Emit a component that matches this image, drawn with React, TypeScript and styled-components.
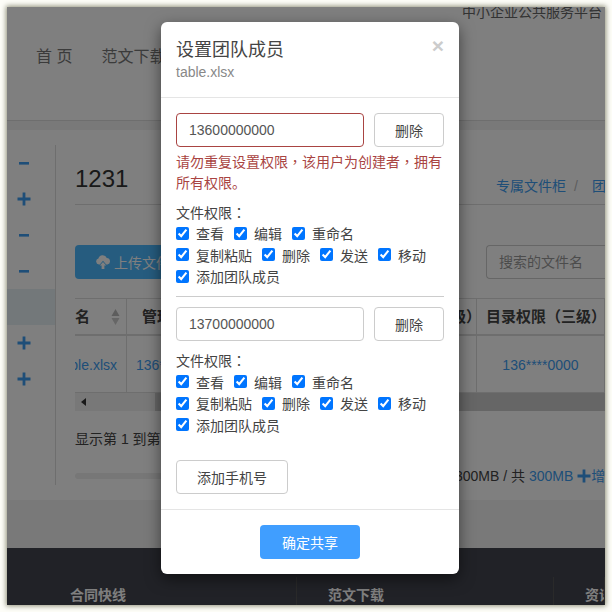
import React from 'react';
import styled, { createGlobalStyle } from 'styled-components';

const FONT = `"Liberation Sans", "Noto Sans CJK SC", sans-serif`;

const GlobalStyle = createGlobalStyle`
  html, body {
    margin: 0;
    padding: 0;
    background: #fdfdf8;
    font-family: ${FONT};
    font-size: 14px;
    color: #444;
  }
  * {
    box-sizing: border-box;
  }
`;

const Stage = styled.div`
  width: 612px;
  height: 612px;
  padding: 7px;
  overflow: hidden;
`;

const Frame = styled.div`
  position: relative;
  width: 598px;
  height: 598px;
  background: #fff;
  overflow: hidden;
  box-shadow: 0 0 5px 1px #8f8f78;
`;

/* page behind the dialog */
const TopNote = styled.div`
  height: 12px;
  padding-right: 3px;
  text-align: right;
  line-height: 10px;
  white-space: nowrap;
  color: #666;
`;

const Nav = styled.div`
  height: 102px;
  display: flex;
  gap: 29px;
  padding: 27px 0 0 29px;
  font-size: 16px;
  line-height: 22px;
  color: #777;
  border-bottom: 1px solid #ddd;
`;

const Main = styled.div`
  height: 427px;
  padding-top: 9px;
  background: #f2f2f2;
`;

const Card = styled.div`
  height: 370px;
  padding-top: 15px;
  background: #fff;
  display: flex;
`;

const Side = styled.div`
  width: 49px;
  height: 340px;
  border-right: 1px solid #ddd;
  display: flex;
  flex-direction: column;
`;

const SideRow = styled.div<{ $active?: boolean }>`
  height: 36px;
  display: flex;
  align-items: center;
  padding-left: 10px;
  background: ${(p) => (p.$active ? '#e6f0f5' : 'transparent')};
  color: #3c9cf0;
`;

const Content = styled.div`
  flex: 1;
  min-width: 0;
  padding-left: 19px;
`;

const TitleRow = styled.div`
  height: 60px;
  display: flex;
  justify-content: space-between;
  padding-top: 15px;
  border-bottom: 1px solid #ddd;
  overflow: hidden;
`;

const PageTitle = styled.div`
  font-size: 24px;
  line-height: 38px;
  color: #333;
`;

const Crumbs = styled.div`
  padding-top: 19px;
  line-height: 14px;
  color: #3c9cf0;
  white-space: nowrap;
  width: 109px;

  span {
    color: #bbb;
    margin: 0 14px 0 8px;
  }
`;

const Tools = styled.div`
  height: 94px;
  display: flex;
  justify-content: space-between;
  padding-top: 40px;
`;

const UploadButton = styled.div`
  width: 120px;
  height: 34px;
  border-radius: 4px;
  background: #4cb8ff;
  color: #fff;
  display: flex;
  align-items: center;
  gap: 3px;
  padding-left: 20px;
  font-size: 14px;
  white-space: nowrap;
`;

const Search = styled.div`
  width: 119px;
  height: 34px;
  border: 1px solid #ccc;
  border-right: none;
  border-radius: 4px 0 0 4px;
  padding-left: 12px;
  line-height: 32px;
  color: #999;
  white-space: nowrap;
  overflow: hidden;
`;

const Table = styled.div`
  border-top: 1px solid #ddd;
  margin-top: -1px;
`;

const TableHead = styled.div`
  height: 37px;
  display: flex;
  border-bottom: 2px solid #ddd;
  font-size: 15px;
  font-weight: bold;
  line-height: 36px;
  white-space: nowrap;
  overflow: hidden;
`;

const TableBody = styled.div`
  height: 57px;
  display: flex;
  border-bottom: 1px solid #ddd;
  line-height: 58px;
  color: #3c9cf0;
  white-space: nowrap;
  overflow: hidden;
`;

const Cell = styled.div<{ $width: number; $center?: boolean; $pad?: number }>`
  position: relative;
  flex: none;
  width: ${(p) => p.$width}px;
  border-right: 1px solid #ddd;
  padding-left: ${(p) => p.$pad ?? 9}px;
  overflow: hidden;
  text-align: ${(p) => (p.$center ? 'center' : 'left')};
`;

const FileCell = styled(Cell)`
  padding: 0 9px 0 0;
  direction: rtl;
`;

const Spacer = styled.div`
  flex: 1;
`;

const Sort = styled.svg`
  position: absolute;
  right: 6px;
  top: 10px;
`;

const Scroll = styled.div`
  height: 18px;
  display: flex;
  background: #f1f1f1;
`;

const ScrollArrow = styled.div`
  width: 17px;
  display: flex;
  align-items: center;
  justify-content: center;
`;

const ScrollThumb = styled.div`
  margin-left: 63px;
  flex: 1;
  background: #ccc;
`;

const Showing = styled.div`
  margin-top: 18px;
  line-height: 20px;
  white-space: nowrap;
`;

const Usage = styled.div`
  position: relative;
  margin-top: 17px;
  height: 20px;
`;

const UsageBar = styled.div`
  position: absolute;
  left: 0;
  right: 0;
  top: 7px;
  height: 6px;
  background: #eee;
  border-radius: 3px;
`;

const UsageText = styled.div`
  position: absolute;
  right: 0;
  top: 0;
  width: 150px;
  display: flex;
  align-items: center;
  line-height: 20px;
  white-space: pre;
  font-size: 14px;
  overflow: hidden;
  background: #fff;

  a {
    display: flex;
    align-items: center;
    color: #3c9cf0;
  }
`;

const Footer = styled.div`
  height: 57px;
  background: #42444e;
  display: flex;
  padding-top: 29px;
  font-weight: bold;
  color: #fff;
  line-height: 20px;
`;

const FooterCol = styled.div<{ $width: number; $pad: number }>`
  flex: none;
  width: ${(p) => p.$width}px;
  padding: 8px 0 0 ${(p) => p.$pad}px;
  white-space: nowrap;
  overflow: hidden;
  border-right: 1px solid #555;
`;

/* dialog */
const Backdrop = styled.div`
  position: absolute;
  inset: 0;
  background: rgba(0, 0, 0, 0.5);
  padding: 15px 0 0 154px;
`;

const Dialog = styled.div`
  width: 298px;
  height: 552px;
  background: #fff;
  border-radius: 6px;
  box-shadow: 0 5px 15px rgba(0, 0, 0, 0.5);
  display: flex;
  flex-direction: column;
`;

const DialogHead = styled.div`
  position: relative;
  height: 76px;
  padding: 15px 15px 0;
  border-bottom: 1px solid #e5e5e5;
`;

const DialogTitle = styled.div`
  font-size: 18px;
  line-height: 26px;
`;

const DialogSub = styled.div`
  margin-top: 1px;
  line-height: 16px;
  color: #888;
`;

const Close = styled.div`
  position: absolute;
  right: 15px;
  top: 13px;
  font-family: "Liberation Sans", sans-serif;
  font-size: 21px;
  font-weight: bold;
  line-height: 21px;
  color: #ccc;
`;

const DialogBody = styled.div`
  flex: 1;
  padding: 15px 15px 0;
`;

const PhoneRow = styled.div`
  display: flex;
  gap: 10px;
`;

const PhoneInput = styled.input<{ $error?: boolean }>`
  width: 188px;
  height: 34px;
  padding: 0 12px;
  border: 1px solid ${(p) => (p.$error ? '#a94442' : '#ccc')};
  border-radius: 4px;
  font-family: ${FONT};
  font-size: 14px;
  color: #555;
  outline: none;
`;

const PlainButton = styled.button<{ $width: number }>`
  width: ${(p) => p.$width}px;
  height: 34px;
  padding: 0;
  background: #fff;
  border: 1px solid #ccc;
  border-radius: 4px;
  font-family: ${FONT};
  font-size: 14px;
  color: #444;
`;

const ErrorText = styled.div`
  margin-top: 5px;
  line-height: 21px;
  color: #a94442;
`;

const Punct = styled.span`
  font-family: "Noto Sans CJK TC", sans-serif;
  line-height: 0;
`;

const PermLabel = styled.div<{ $top: number }>`
  margin-top: ${(p) => p.$top}px;
  line-height: 20px;
`;

const PermRow = styled.div`
  display: flex;
  height: 21.5px;
  align-items: center;
  gap: 10px;
`;

const Perm = styled.label`
  display: flex;
  align-items: center;
  gap: 7px;
  white-space: nowrap;

  input {
    width: 13px;
    height: 13px;
    margin: 0;
    flex: none;
  }
`;

const Rule = styled.hr`
  margin: 8.5px 0 10px;
  border: none;
  border-top: 1px solid #ccc;
`;

const AddRow = styled.div`
  margin-top: 24.5px;
`;

const DialogFoot = styled.div`
  height: 65px;
  border-top: 1px solid #e5e5e5;
  display: flex;
  justify-content: center;
  padding-top: 15px;
`;

const Confirm = styled.button`
  width: 100px;
  height: 34px;
  padding: 0;
  background: #409eff;
  border: none;
  border-radius: 4px;
  font-family: ${FONT};
  font-size: 14px;
  color: #fff;
`;

const MinusIcon = () => (
  <svg width="14" height="14" viewBox="0 0 14 14">
    <rect x="2" y="6" width="10" height="2.6" fill="currentColor" />
  </svg>
);

const PlusIcon = () => (
  <svg width="14" height="14" viewBox="0 0 14 14">
    <path d="M5.6 0.5h2.8v5.1h5.1v2.8H8.4v5.1H5.6V8.4H0.5V5.6h5.1z" fill="currentColor" />
  </svg>
);

const CloudIcon = () => (
  <svg width="16" height="14" viewBox="0 0 16 14">
    <path d="M4 9.5a3 3 0 0 1-.6-5.9 4.4 4.4 0 0 1 8.4-.6A3.3 3.3 0 0 1 12.5 9.5h-1.3L8 5.8 4.8 9.5z" fill="currentColor" />
    <path d="M8 7l3.2 3.6H9.4V14H6.6v-3.4H4.8z" fill="currentColor" />
  </svg>
);

const PERM_ROWS = [
  ['查看', '编辑', '重命名'],
  ['复制粘贴', '删除', '发送', '移动'],
  ['添加团队成员'],
];

const Permissions = ({ top }: { top: number }) => (
  <>
    <PermLabel $top={top}>
      文件权限<Punct>：</Punct>
    </PermLabel>
    {PERM_ROWS.map((row) => (
      <PermRow key={row[0]}>
        {row.map((name) => (
          <Perm key={name}>
            <input type="checkbox" checked readOnly />
            {name}
          </Perm>
        ))}
      </PermRow>
    ))}
  </>
);

const SIDE_ITEMS = ['minus', 'plus', 'minus', 'minus', 'active', 'plus', 'plus'];

export default function App() {
  return (
    <Stage>
      <GlobalStyle />
      <Frame>
        <TopNote>中小企业公共服务平台</TopNote>
        <Nav>
          <span>首 页</span>
          <span>范文下载</span>
        </Nav>
        <Main>
          <Card>
            <Side>
              {SIDE_ITEMS.map((item, i) => (
                <SideRow key={i} $active={item === 'active'}>
                  {item === 'minus' && <MinusIcon />}
                  {item === 'plus' && <PlusIcon />}
                </SideRow>
              ))}
            </Side>
            <Content>
              <TitleRow>
                <PageTitle>1231</PageTitle>
                <Crumbs>
                  专属文件柜<span>/</span>团队
                </Crumbs>
              </TitleRow>
              <Tools>
                <UploadButton>
                  <CloudIcon />
                  上传文件
                </UploadButton>
                <Search>搜索的文件名</Search>
              </Tools>
              <Table>
                <TableHead>
                  <Cell $width={52} $pad={0}>
                    名
                    <Sort width="9" height="16" viewBox="0 0 9 16">
                      <path d="M4.5 0L8.5 7H0.5z" fill="#bbb" />
                      <path d="M4.5 16L8.5 9H0.5z" fill="#ccc" />
                    </Sort>
                  </Cell>
                  <Cell $width={100} $pad={15}>管理员</Cell>
                  <Spacer />
                  <Cell $width={125}>目录权限（二级）</Cell>
                  <Cell $width={128}>目录权限（三级）</Cell>
                </TableHead>
                <TableBody>
                  <FileCell $width={52}>table.xlsx</FileCell>
                  <Cell $width={100}>136****0000</Cell>
                  <Spacer />
                  <Cell $width={125} $center $pad={0}>136****0000</Cell>
                  <Cell $width={128} $center $pad={0}>136****0000</Cell>
                </TableBody>
                <Scroll>
                  <ScrollArrow>
                    <svg width="6" height="8" viewBox="0 0 6 8">
                      <path d="M5 0v8L0 4z" fill="#333" />
                    </svg>
                  </ScrollArrow>
                  <ScrollThumb />
                </Scroll>
              </Table>
              <Showing>显示第 1 到第 1 条记录</Showing>
              <Usage>
                <UsageBar />
                <UsageText>
                  {'300MB / 共 '}
                  <a>300MB </a>
                  <a>
                    <PlusIcon />
                    增加
                  </a>
                </UsageText>
              </Usage>
            </Content>
          </Card>
        </Main>
        <Footer>
          <FooterCol $width={290} $pad={63}>合同快线</FooterCol>
          <FooterCol $width={257} $pad={31}>范文下载</FooterCol>
          <FooterCol $width={51} $pad={31}>资讯</FooterCol>
        </Footer>
        <Backdrop>
          <Dialog>
            <DialogHead>
              <DialogTitle>设置团队成员</DialogTitle>
              <DialogSub>table.xlsx</DialogSub>
              <Close>×</Close>
            </DialogHead>
            <DialogBody>
              <PhoneRow>
                <PhoneInput $error defaultValue="13600000000" />
                <PlainButton $width={70}>删除</PlainButton>
              </PhoneRow>
              <ErrorText>
                请勿重复设置权限<Punct>，</Punct>该用户为创建者<Punct>，</Punct>拥有所有权限。
              </ErrorText>
              <Permissions top={8.5} />
              <Rule />
              <PhoneRow>
                <PhoneInput defaultValue="13700000000" />
                <PlainButton $width={70}>删除</PlainButton>
              </PhoneRow>
              <Permissions top={10.5} />
              <AddRow>
                <PlainButton $width={112}>添加手机号</PlainButton>
              </AddRow>
            </DialogBody>
            <DialogFoot>
              <Confirm>确定共享</Confirm>
            </DialogFoot>
          </Dialog>
        </Backdrop>
      </Frame>
    </Stage>
  );
}
